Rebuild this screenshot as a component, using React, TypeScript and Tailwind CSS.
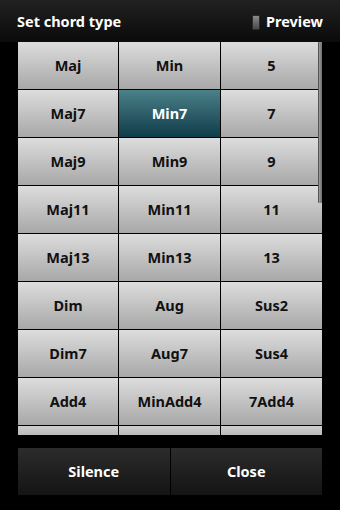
import React from 'react';

const chords = [
  'Maj', 'Min', '5',
  'Maj7', 'Min7', '7',
  'Maj9', 'Min9', '9',
  'Maj11', 'Min11', '11',
  'Maj13', 'Min13', '13',
  'Dim', 'Aug', 'Sus2',
  'Dim7', 'Aug7', 'Sus4',
  'Add4', 'MinAdd4', '7Add4',
  '', '', '',
];

const selected = 'Min7';

export default function App() {
  return (
    <div className="w-[340px] h-[510px] bg-black flex flex-col font-['Noto_Sans',sans-serif] font-bold overflow-hidden">
      {/* Title bar */}
      <div className="h-[42px] shrink-0 flex items-center justify-between pl-[17px] pr-[17px] pt-[2px] bg-gradient-to-b from-[#212121] to-[#0b0b0b]">
        <span className="text-white text-[14.5px]">Set chord type</span>
        <div className="flex items-center gap-[6px]">
          <div className="w-[8px] h-[15px] rounded-[1px] border border-[#2a2a2a] bg-gradient-to-b from-[#8a8a8a] to-[#4a4a4a]" />
          <span className="text-white text-[14.5px]">Preview</span>
        </div>
      </div>

      {/* Chord grid */}
      <div className="relative ml-[18px] w-[304px] h-[393px] overflow-hidden shrink-0">
        <div className="grid grid-cols-[100px_101px_101px] gap-px bg-black">
          {chords.map((c, i) => {
            const last = i >= 24;
            const on = c === selected;
            return (
              <div
                key={i}
                className={
                  'h-[47px] flex items-center justify-center text-[14.5px] ' +
                  (on
                    ? 'bg-gradient-to-b from-[#4b8189] to-[#0f3d4b] text-white'
                    : last
                    ? 'bg-gradient-to-b from-[#cfcfcf] via-[#9a9a9a] to-[#3a3a3a] text-[#111]'
                    : 'bg-gradient-to-b from-[#dddddd] to-[#a8a8a8] text-[#111]')
                }
              >
                {c}
              </div>
            );
          })}
        </div>
        {/* scrollbar */}
        <div className="absolute right-0 top-0 w-[4px] h-[161px] rounded-[1px] bg-gradient-to-r from-[#9c9c9c] to-[#6e6e6e] border-l border-[#555]" />
      </div>

      {/* Bottom buttons */}
      <div className="mt-[13px] ml-[18px] w-[304px] h-[47px] flex gap-px bg-black">
        <div className="flex-1 flex items-center justify-center text-white text-[14.5px] bg-gradient-to-b from-[#2c2c2c] to-[#141414]">
          Silence
        </div>
        <div className="flex-1 flex items-center justify-center text-white text-[14.5px] bg-gradient-to-b from-[#2c2c2c] to-[#141414]">
          Close
        </div>
      </div>
    </div>
  );
}
